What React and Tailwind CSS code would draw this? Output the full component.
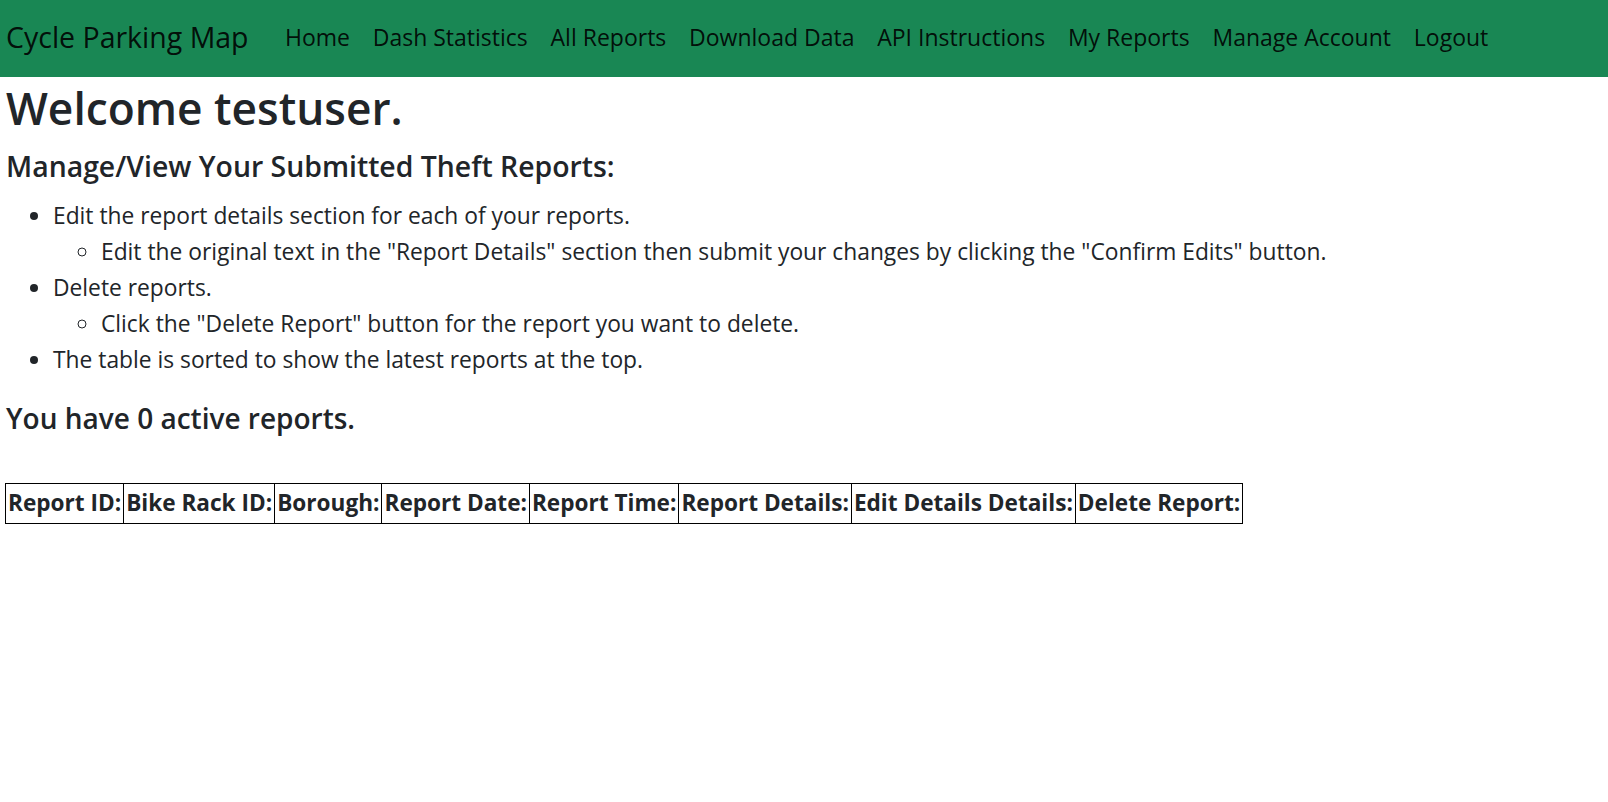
const NAV_LINKS = [
  'Home',
  'Dash Statistics',
  'All Reports',
  'Download Data',
  'API Instructions',
  'My Reports',
  'Manage Account',
  'Logout'
]

const COLUMNS = [
  'Report ID:',
  'Bike Rack ID:',
  'Borough:',
  'Report Date:',
  'Report Time:',
  'Report Details:',
  'Edit Details Details:',
  'Delete Report:'
]

export default function App() {
  const reports = []

  return (
    <div className="min-h-screen bg-white text-[#212529] font-['Open_Sans',sans-serif]">
      {/* ── Navbar ── */}
      <nav className="h-[77px] bg-[#198754] flex items-center pl-[6px] pb-[3px]">
        <a href="#" className="text-[28.5px] text-black/90 mr-[25px] whitespace-nowrap">
          Cycle Parking Map
        </a>
        <ul className="flex items-center">
          {NAV_LINKS.map(label => (
            <li key={label}>
              <a href="#" className="block px-[11.4px] text-[23px] text-black/90 whitespace-nowrap">
                {label}
              </a>
            </li>
          ))}
        </ul>
      </nav>

      {/* ── Contenido ── */}
      <div className="px-[6px]">
        <h1 className="text-[44.3px] font-semibold leading-[1.2] mt-[5px]">Welcome testuser.</h1>
        <h2 className="text-[28.4px] font-semibold leading-[1.2] mt-[14px]">
          Manage/View Your Submitted Theft Reports:
        </h2>

        <ul className="list-disc pl-[47px] mt-[15px] text-[22.8px] leading-[36px]">
          <li>
            Edit the report details section for each of your reports.
            <ul className="list-[circle] pl-[48px]">
              <li>
                Edit the original text in the "Report Details" section then submit your changes by clicking the "Confirm Edits" button.
              </li>
            </ul>
          </li>
          <li>
            Delete reports.
            <ul className="list-[circle] pl-[48px]">
              <li>Click the "Delete Report" button for the report you want to delete.</li>
            </ul>
          </li>
          <li>The table is sorted to show the latest reports at the top.</li>
        </ul>

        <h3 className="text-[28px] font-semibold leading-[1.2] mt-[24px]">
          You have {reports.length} active reports.
        </h3>

        <table className="mt-[47px] -ml-px border-collapse">
          <thead>
            <tr>
              {COLUMNS.map(col => (
                <th
                  key={col}
                  className="border border-black px-[2px] h-[40px] text-[22.6px] font-bold whitespace-nowrap text-left"
                >
                  {col}
                </th>
              ))}
            </tr>
          </thead>
          <tbody />
        </table>
      </div>
    </div>
  )
}
